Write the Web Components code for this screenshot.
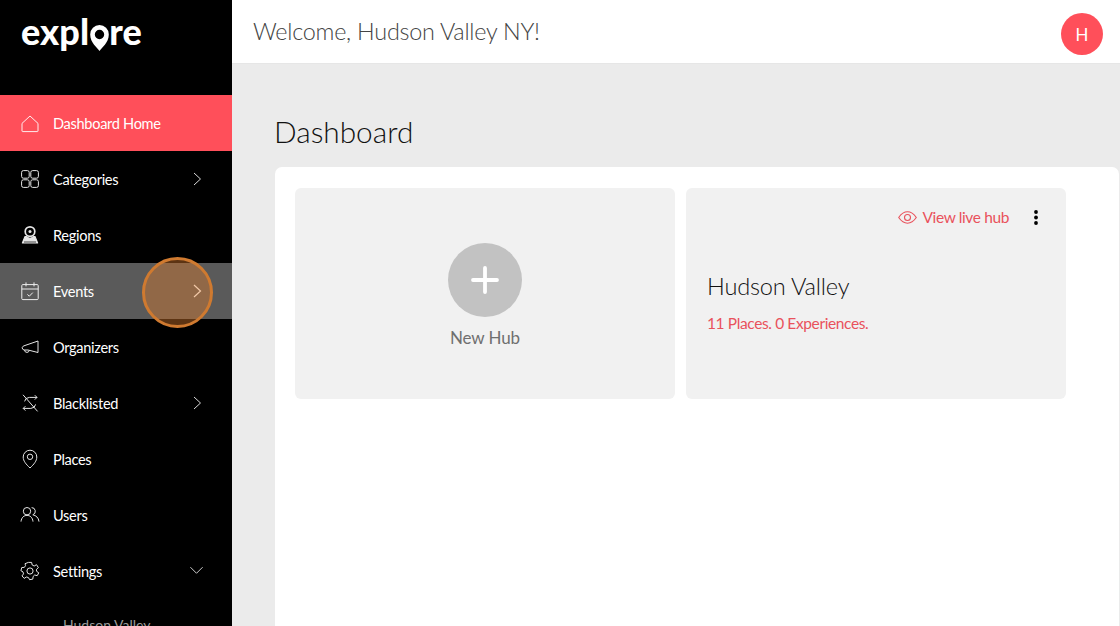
<!DOCTYPE html>
<html>
<head>
<meta charset="utf-8">
<title>Dashboard</title>
<style>
  html, body { margin: 0; height: 100%; overflow: hidden; }
  body { font-family: Lato, "Liberation Sans", sans-serif; }
</style>
</head>
<body>
<app-shell>
  <side-nav slot="nav">
    <nav-item icon="home" active>Dashboard Home</nav-item>
    <nav-item icon="grid" arrow="right">Categories</nav-item>
    <nav-item icon="region">Regions</nav-item>
    <nav-item icon="calendar" arrow="right" hover>Events</nav-item>
    <nav-item icon="megaphone">Organizers</nav-item>
    <nav-item icon="blocked" arrow="right">Blacklisted</nav-item>
    <nav-item icon="pin">Places</nav-item>
    <nav-item icon="users">Users</nav-item>
    <nav-item icon="gear" arrow="down">Settings</nav-item>
    <nav-subitem>Hudson Valley</nav-subitem>
  </side-nav>
  <top-bar slot="top" initial="H">Welcome, Hudson Valley NY!</top-bar>
  <dash-board>
    <new-hub-card>New Hub</new-hub-card>
    <hub-card name="Hudson Valley" stats="11 Places. 0 Experiences."></hub-card>
  </dash-board>
  <click-marker slot="overlay"></click-marker>
</app-shell>

<script>
const ICONS = {
  home: '<path d="M2 10.4 L10 3 L18 10.4 V18 Q18 18.6 17.4 18.6 H2.6 Q2 18.6 2 18 Z" stroke-linejoin="round"/>',
  grid: '<rect x="1.6" y="1.6" width="7.6" height="7.6" rx="1.8"/><rect x="10.8" y="1.6" width="7.6" height="7.6" rx="1.8"/><rect x="1.6" y="10.8" width="7.6" height="7.6" rx="1.8"/><rect x="10.8" y="10.8" width="7.6" height="7.6" rx="1.8"/>',
  region: '<circle cx="10" cy="6.6" r="4.8" stroke-width="1.7"/><circle cx="10" cy="6.6" r="1.5" fill="currentColor" stroke="none"/><path d="M6.6 11.6 H5 L2.4 18 H17.6 L15 11.6 H13.4 Q10 15 6.6 11.6 Z" fill="currentColor" stroke-width="1.2" stroke-linejoin="round"/><path d="M4 17 H16" stroke="#000" stroke-width=".7"/>',
  calendar: '<rect x="1.8" y="3.6" width="16.4" height="15" rx="1"/><path d="M1.8 8 H18.2 M6 1.4 V5.4 M14 1.4 V5.4 M7.4 13.4 L9.3 15.2 L12.8 11.6"/>',
  megaphone: '<path d="M18 4 V15.5 L8 13 H4 Q2 12.4 2.2 10.6 Q2.4 9.4 4 8.8 Z M4.6 13 Q4.6 15.4 7 15.4 Q9 15.4 9.2 13.3"/>',
  blocked: '<path d="M3 1.8 L17.6 18.4 M4.6 8.4 Q5.2 4.6 9.4 4.4 H17 L14.8 2.2 M17 4.4 L14.8 6.6 M15.6 11.4 Q15 15.2 10.8 15.4 H3.2 L5.4 13.2 M3.2 15.4 L5.4 17.6"/>',
  pin: '<path d="M10 19 C6 15.2 3.2 12 3.2 8 A6.8 6.8 0 0 1 16.8 8 C16.8 12 14 15.2 10 19 Z"/><circle cx="10" cy="7.8" r="2.7"/>',
  users: '<circle cx="7" cy="6.2" r="3.7"/><path d="M1 16.6 C1.4 12.4 4 10.4 7 10.4 C10 10.4 12.6 12.4 13 16.6"/><path d="M11.6 2.6 A3.7 3.7 0 0 1 12.8 9.8 C16 10.4 18.6 12.6 19 16.6"/>',
  gear: '<circle cx="10" cy="10" r="3.1"/><path d="M8.4 1.4 H11.6 L12.2 4 L14.2 5 L16.5 3.7 L18.4 6.6 L16.5 8.3 L16.6 10.3 L18.8 11.8 L17.2 14.7 L14.7 14 L13.1 15.5 L12.8 18.1 L9.6 18.7 L8.4 16.5 L6.4 16 L4.2 17.4 L2 14.9 L3.5 12.9 L3 10.9 L.9 9.7 L1.8 6.5 L4.3 6.4 L5.5 4.7 L5 2.7 Z" stroke-linejoin="round"/>'
};

class AppShell extends HTMLElement {
  constructor() {
    super();
    this.attachShadow({ mode: "open" }).innerHTML = `
      <style>
        :host { display: grid; grid-template-columns: 232px 1fr; grid-template-rows: 64px 1fr; height: 626px; overflow: hidden; position: relative; }
        .nav { grid-row: 1 / 3; min-height: 0; overflow: hidden; }
        .main { min-width: 0; min-height: 0; overflow: hidden; }
      </style>
      <div class="nav"><slot name="nav"></slot></div>
      <slot name="top"></slot>
      <div class="main"><slot></slot></div>
      <slot name="overlay"></slot>`;
  }
}

class SideNav extends HTMLElement {
  constructor() {
    super();
    this.attachShadow({ mode: "open" }).innerHTML = `
      <style>
        :host { display: block; height: 100%; background: #000; color: #fff; }
        .logo { display: flex; align-items: flex-start; height: 95px; padding: 12px 0 0 21px; box-sizing: border-box; font: 900 36px/38px Lato, sans-serif; letter-spacing: .1px; color: #fff; }
        .logo svg { width: 19px; height: 26px; margin: 13px .5px 0 .5px; flex: none; }
      </style>
      <div class="logo"><span>expl</span><svg viewBox="0 0 19 26"><path fill="#fff" fill-rule="evenodd" d="M9.5 26 C7.5 22.5 .2 18 .2 9.4 A9.3 9.3 0 0 1 18.8 9.4 C18.8 18 11.5 22.5 9.5 26 Z M9.5 4.8 A4.7 4.7 0 1 0 9.5 14.2 A4.7 4.7 0 0 0 9.5 4.8 Z"/></svg><span>re</span></div>
      <slot></slot>`;
  }
}

class NavItem extends HTMLElement {
  constructor() {
    super();
    const icon = ICONS[this.getAttribute("icon")] || "";
    const arrow = this.getAttribute("arrow");
    let arrowSvg = "";
    if (arrow === "right") arrowSvg = '<svg class="arrow" viewBox="0 0 10 16"><path d="M2 2 L8.5 8 L2 14"/></svg>';
    if (arrow === "down") arrowSvg = '<svg class="arrow down" viewBox="0 0 16 10"><path d="M1.5 2 L8 8.5 L14.5 2"/></svg>';
    this.attachShadow({ mode: "open" }).innerHTML = `
      <style>
        :host { display: flex; align-items: center; height: 56px; padding-left: 19.5px; font-size: 14.6px; letter-spacing: -.32px; color: #fff; position: relative; }
        :host([active]) { background: #ff4f5a; }
        :host([hover]) { background: #5a5a5a; }
        .icon { width: 20px; height: 20px; margin-right: 13.5px; flex: none; fill: none; stroke: currentColor; stroke-width: 1; opacity: .9; }
        .arrow { position: absolute; left: 192px; top: 20px; width: 10px; height: 16px; fill: none; stroke: #d9d9d9; stroke-width: 1; }
        .arrow.down { left: 189px; top: 22px; width: 15px; height: 10px; }
        :host([hover]) .arrow { stroke: #fff; stroke-width: 1.2; }
      </style>
      <svg class="icon" viewBox="0 0 20 20">${icon}</svg><span><slot></slot></span>${arrowSvg}`;
  }
}

class NavSubitem extends HTMLElement {
  constructor() {
    super();
    this.attachShadow({ mode: "open" }).innerHTML = `
      <style>:host { display: block; padding: 17px 0 0 63px; font-size: 14px; color: #9a9a9a; }</style>
      <slot></slot>`;
  }
}

class TopBar extends HTMLElement {
  constructor() {
    super();
    this.attachShadow({ mode: "open" }).innerHTML = `
      <style>
        :host { display: flex; align-items: center; justify-content: space-between; box-sizing: border-box; height: 64px; padding: 0 17px 0 21px; background: #fff; border-bottom: 1px solid #e6e6e6; }
        .title { font-size: 23.4px; letter-spacing: -.25px; font-weight: 300; color: #444; padding-bottom: 2px; }
        .avatar { width: 42px; height: 42px; border-radius: 50%; background: #ff4f5a; color: #fff; display: flex; align-items: center; justify-content: center; font: 18px "Noto Sans", sans-serif; margin-top: 4px; }
      </style>
      <span class="title"><slot></slot></span>
      <div class="avatar">${this.getAttribute("initial")}</div>`;
  }
}

class DashBoard extends HTMLElement {
  constructor() {
    super();
    this.attachShadow({ mode: "open" }).innerHTML = `
      <style>
        :host { display: flex; flex-direction: column; height: 100%; background: #ebebeb; padding: 0 1.5px 0 43px; box-sizing: border-box; }
        h1 { margin: 49px 0 17px -1px; font-size: 29.8px; line-height: 37px; font-weight: 300; color: #111; }
        .panel { flex: 1; background: #fff; border-radius: 7px 7px 0 0; padding: 21px 52px 0 20px; display: grid; grid-template-columns: 380px 380px; grid-template-rows: 211px; gap: 11px; }
      </style>
      <h1>Dashboard</h1>
      <div class="panel"><slot></slot></div>`;
  }
}

class NewHubCard extends HTMLElement {
  constructor() {
    super();
    this.attachShadow({ mode: "open" }).innerHTML = `
      <style>
        :host { display: flex; flex-direction: column; align-items: center; padding-top: 55px; box-sizing: border-box; background: #f1f1f1; border-radius: 6px; font-size: 17px; letter-spacing: -.1px; color: #6f6f6f; }
        .plus { width: 74px; height: 74px; margin-bottom: 10px; }
      </style>
      <svg class="plus" viewBox="0 0 74 74"><circle cx="37" cy="37" r="37" fill="#c2c2c2"/><path d="M37 25 V49 M25 37 H49" stroke="#fff" stroke-width="3.8" stroke-linecap="round"/></svg>
      <slot></slot>`;
  }
}

class HubCard extends HTMLElement {
  constructor() {
    super();
    this.attachShadow({ mode: "open" }).innerHTML = `
      <style>
        :host { display: block; box-sizing: border-box; padding: 19px 21px 0; background: #f1f1f1; border-radius: 6px; }
        .actions { display: flex; justify-content: flex-end; align-items: center; height: 21px; color: #e9525c; font-size: 15.5px; letter-spacing: -.38px; }
        .actions span { padding-bottom: 2px; }
        .eye { width: 19px; height: 13px; margin-right: 6px; fill: none; stroke: currentColor; stroke-width: 1.1; }
        .dots { width: 4px; height: 15px; margin: 0 7px 0 25px; }
        .name { margin-top: 43px; font-size: 23.6px; letter-spacing: -.2px; line-height: 30px; font-weight: 300; color: #111; }
        .stats { margin-top: 13px; font-size: 15.5px; letter-spacing: -.38px; line-height: 18px; color: #e9525c; }
      </style>
      <div class="actions">
        <svg class="eye" viewBox="0 0 19 13"><path d="M.7 6.5 C4 1.8 7 .8 9.5 .8 C12 .8 15 1.8 18.3 6.5 C15 11.2 12 12.2 9.5 12.2 C7 12.2 4 11.2 .7 6.5 Z"/><circle cx="9.5" cy="6.5" r="3"/></svg>
        <span>View live hub</span>
        <svg class="dots" viewBox="0 0 4 15"><circle cx="2" cy="2" r="1.9"/><circle cx="2" cy="7.5" r="1.9"/><circle cx="2" cy="13" r="1.9"/></svg>
      </div>
      <div class="name">${this.getAttribute("name")}</div>
      <div class="stats">${this.getAttribute("stats")}</div>`;
  }
}

class ClickMarker extends HTMLElement {
  constructor() {
    super();
    this.attachShadow({ mode: "open" }).innerHTML = `
      <style>
        :host { position: absolute; left: 141.5px; top: 256.5px; width: 71px; height: 71px; box-sizing: border-box; border-radius: 50%; border: 3px solid #cf7a30; background: rgba(222, 125, 45, .42); pointer-events: none; }
      </style>`;
  }
}

customElements.define("app-shell", AppShell);
customElements.define("side-nav", SideNav);
customElements.define("nav-item", NavItem);
customElements.define("nav-subitem", NavSubitem);
customElements.define("top-bar", TopBar);
customElements.define("dash-board", DashBoard);
customElements.define("new-hub-card", NewHubCard);
customElements.define("hub-card", HubCard);
customElements.define("click-marker", ClickMarker);
</script>
</body>
</html>
